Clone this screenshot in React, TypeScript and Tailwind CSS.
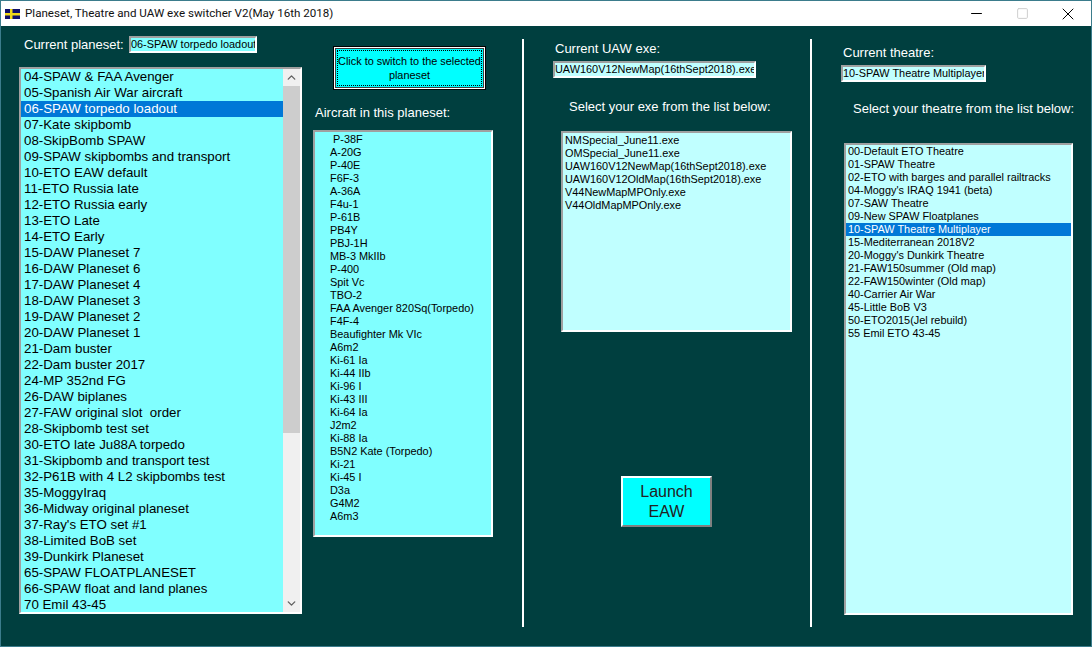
import { ChevronDown, ChevronUp, Minus, Square, X } from "lucide-react";

const planesets = [
  "04-SPAW & FAA Avenger",
  "05-Spanish Air War aircraft",
  "06-SPAW torpedo loadout",
  "07-Kate skipbomb",
  "08-SkipBomb SPAW",
  "09-SPAW skipbombs and transport",
  "10-ETO EAW default",
  "11-ETO Russia late",
  "12-ETO Russia early",
  "13-ETO Late",
  "14-ETO Early",
  "15-DAW Planeset 7",
  "16-DAW Planeset 6",
  "17-DAW Planeset 4",
  "18-DAW Planeset 3",
  "19-DAW Planeset 2",
  "20-DAW Planeset 1",
  "21-Dam buster",
  "22-Dam buster 2017",
  "24-MP 352nd FG",
  "26-DAW biplanes",
  "27-FAW original slot  order",
  "28-Skipbomb test set",
  "30-ETO late Ju88A torpedo",
  "31-Skipbomb and transport test",
  "32-P61B with 4 L2 skipbombs test",
  "35-MoggyIraq",
  "36-Midway original planeset",
  "37-Ray's ETO set #1",
  "38-Limited BoB set",
  "39-Dunkirk Planeset",
  "65-SPAW FLOATPLANESET",
  "66-SPAW float and land planes",
  "70 Emil 43-45",
];

const aircraft = [
  "P-38F", "A-20G", "P-40E", "F6F-3", "A-36A", "F4u-1", "P-61B", "PB4Y", "PBJ-1H", "MB-3 MkIIb",
  "P-400", "Spit Vc", "TBO-2", "FAA Avenger 820Sq(Torpedo)", "F4F-4", "Beaufighter Mk VIc", "A6m2",
  "Ki-61 Ia", "Ki-44 IIb", "Ki-96 I", "Ki-43 III", "Ki-64 Ia", "J2m2", "Ki-88 Ia", "B5N2 Kate (Torpedo)",
  "Ki-21", "Ki-45 I", "D3a", "G4M2", "A6m3",
];

const exes = [
  "NMSpecial_June11.exe",
  "OMSpecial_June11.exe",
  "UAW160V12NewMap(16thSept2018).exe",
  "UAW160V12OldMap(16thSept2018).exe",
  "V44NewMapMPOnly.exe",
  "V44OldMapMPOnly.exe",
];

const theatres = [
  "00-Default ETO Theatre",
  "01-SPAW Theatre",
  "02-ETO with barges and parallel railtracks",
  "04-Moggy's IRAQ 1941 (beta)",
  "07-SAW Theatre",
  "09-New SPAW Floatplanes",
  "10-SPAW Theatre Multiplayer",
  "15-Mediterranean 2018V2",
  "20-Moggy's Dunkirk Theatre",
  "21-FAW150summer (Old map)",
  "22-FAW150winter (Old map)",
  "40-Carrier Air War",
  "45-Little BoB V3",
  "50-ETO2015(Jel rebuild)",
  "55 Emil ETO 43-45",
];

const sunken = "border-2 border-t-[#a0a0a0] border-l-[#a0a0a0] border-r-white border-b-white";

const Flag = () => (
  <svg width="15" height="10" viewBox="0 0 15 10" className="shrink-0">
    <rect width="15" height="10" fill="#10106a" />
    <rect x="5" width="2.5" height="10" fill="#f0d818" />
    <rect y="4" width="15" height="2.5" fill="#f0d818" />
  </svg>
);

const TitleBar = () => (
  <div className="flex h-[25px] shrink-0 items-center bg-white pl-[4px] font-['Roboto',sans-serif] text-[11.6px] text-[#111]">
    <Flag />
    <span className="ml-[5px]">Planeset, Theatre and UAW exe switcher V2(May 16th 2018)</span>
    <div className="ml-auto flex items-center text-black">
      <span className="flex w-[46px] justify-center">
        <Minus size={17} strokeWidth={1} absoluteStrokeWidth />
      </span>
      <span className="flex w-[46px] justify-center text-[#cfcfcf]">
        <Square size={13} strokeWidth={1} absoluteStrokeWidth />
      </span>
      <span className="flex w-[46px] justify-center">
        <X size={20} strokeWidth={1} absoluteStrokeWidth />
      </span>
    </div>
  </div>
);

const Divider = () => <div className="mb-[19px] mt-[13px] w-[2px] shrink-0 bg-white" />;

export default function App() {
  return (
    <div className="flex h-[647px] w-[1092px] flex-col overflow-hidden border-x border-b border-[#3b7c8c] bg-[#003f3f] font-['Liberation_Sans',sans-serif] text-black">
      <div className="h-px shrink-0 bg-[#3b7c8c]" />
      <TitleBar />
      <div className="flex min-h-0 flex-1">
        {/* planeset list */}
        <div className="w-[312px] shrink-0 pl-[18px] pt-[10px]">
          <div className="flex h-[17px] items-center pl-[5px]">
            <span className="w-[105px] whitespace-nowrap text-[13px] text-white">Current planeset:</span>
            <div className={`${sunken} flex h-[17px] w-[128px] items-center overflow-hidden whitespace-nowrap bg-[#80ffff] text-[10.9px]`}>
              06-SPAW torpedo loadout
            </div>
          </div>
          <div className={`${sunken} mt-[14px] flex h-[547px] w-[283px] bg-[#80ffff]`}>
            <div className="min-w-0 flex-1 text-[13.3px] leading-[16px]">
              {planesets.map((name) => (
                <div
                  key={name}
                  className={`h-4 whitespace-pre pl-[3px] ${name.startsWith("06-") ? "bg-[#0078d7] text-white" : ""}`}
                >
                  {name}
                </div>
              ))}
            </div>
            <div className="flex w-[17px] shrink-0 flex-col bg-[#f0f0f0] text-[#606060]">
              <div className="flex h-[17px] items-center justify-center">
                <ChevronUp size={13} strokeWidth={2.5} />
              </div>
              <div className="h-[347px] bg-[#cdcdcd]" />
              <div className="mt-auto flex h-[17px] items-center justify-center">
                <ChevronDown size={13} strokeWidth={2.5} />
              </div>
            </div>
          </div>
        </div>

        {/* aircraft in the planeset */}
        <div className="w-[209px] shrink-0 pt-[20px]">
          <button
            type="button"
            className="ml-[20px] flex h-[44px] w-[153px] items-center justify-center border border-black bg-white p-px"
          >
            <span className="flex h-full w-full items-center justify-center border border-[#404040] bg-[#00ffff] p-px">
              <span className="flex h-full w-full items-center justify-center border border-dotted border-black text-center text-[10.9px] leading-[14px]">
                Click to switch to the selected
                <br />
                planeset
              </span>
            </span>
          </button>
          <div className="mt-[15px] whitespace-nowrap pl-[2px] text-[13px] leading-4 text-white">Aircraft in this planeset:</div>
          <div className={`${sunken} mt-[9px] h-[407px] w-[180px] bg-[#80ffff] pl-[15px] pt-px text-[10.9px] leading-[13px]`}>
            {aircraft.map((name) => (
              <div key={name} className={`h-[13px] whitespace-nowrap ${name === "P-38F" ? "pl-[3px]" : ""}`}>
                {name}
              </div>
            ))}
          </div>
        </div>

        <Divider />

        {/* exe column */}
        <div className="flex w-[286px] shrink-0 flex-col pl-[29px] pt-[15px]">
          <div className="whitespace-nowrap pl-[2px] text-[13px] leading-4 text-white">Current UAW exe:</div>
          <div className={`${sunken} mt-[4px] flex h-[17px] w-[203px] items-center overflow-hidden whitespace-nowrap bg-[#c0ffff] text-[10.9px]`}>
            UAW160V12NewMap(16thSept2018).exe
          </div>
          <div className="mt-[21px] whitespace-nowrap pl-[16px] text-[13px] leading-4 text-white">Select your exe from the list below:</div>
          <div className={`${sunken} ml-[8px] mt-[16px] h-[201px] w-[231px] bg-[#c0ffff] pl-[2px] pt-px text-[10.9px] leading-[13px]`}>
            {exes.map((name) => (
              <div key={name} className="h-[13px] whitespace-nowrap">
                {name}
              </div>
            ))}
          </div>
          <button
            type="button"
            className="ml-[68px] mt-[144px] h-[51px] w-[91px] border-2 border-t-white border-l-white border-r-[#808080] border-b-[#808080] bg-[#00ffff] text-[16px] leading-[20px] text-[#222]"
          >
            Launch
            <br />
            EAW
          </button>
        </div>

        <Divider />

        {/* theatre column */}
        <div className="flex flex-1 flex-col pl-[29px] pt-[19px]">
          <div className="whitespace-nowrap pl-[2px] text-[13px] leading-4 text-white">Current theatre:</div>
          <div className={`${sunken} mt-[4px] flex h-[17px] w-[145px] items-center overflow-hidden whitespace-nowrap bg-[#c0ffff] text-[10.9px]`}>
            10-SPAW Theatre Multiplayer
          </div>
          <div className="mt-[19px] whitespace-nowrap pl-[12px] text-[13px] leading-4 text-white">Select your theatre from the list below:</div>
          <div className={`${sunken} ml-[3px] mt-[26px] h-[472px] w-[229px] bg-[#c0ffff] text-[10.9px] leading-[13px]`}>
            {theatres.map((name) => (
              <div
                key={name}
                className={`h-[13px] whitespace-nowrap pl-[2px] ${name.startsWith("10-") ? "bg-[#0078d7] text-white" : ""}`}
              >
                {name}
              </div>
            ))}
          </div>
        </div>
      </div>
    </div>
  );
}
